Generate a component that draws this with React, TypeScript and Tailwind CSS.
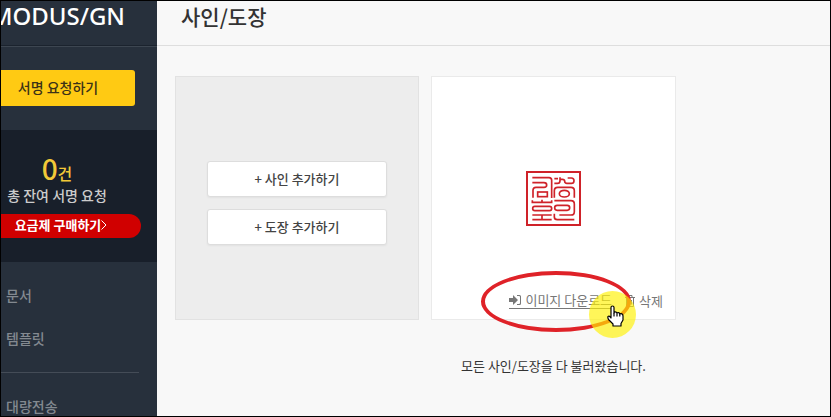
import React from 'react'

const menu = ['문서', '템플릿']

const Seal = () => (
    <svg viewBox="36 33 165 165" className="size-[55px]" fill="none" stroke="#cf2229" strokeWidth="5" role="img" aria-label="도장">
        <rect x="39" y="36" width="159" height="159" strokeWidth="6" />
        <path d="M55 53H105Q113 53 113 61V114" />
        <path d="M55 68H90Q98 68 98 75T90 82H66Q57 82 57 91V113" />
        <rect x="71" y="96" width="29" height="14" />
        <path d="M55 121V127H113V121M84 119V127" />
        <rect x="56" y="139" width="57" height="13" rx="6.5" />
        <path d="M55 165H113M84 165V178M55 179H113" />
        <path d="M121 56H132M121 70H130Q138 70 138 62V52M138 58H145Q152 58 152 64T159 70H172Q180 70 180 62T172 54H161" />
        <path d="M121 113V92Q121 82 131 82H171Q181 82 181 92V113" />
        <ellipse cx="151" cy="101" rx="15" ry="10" />
        <path d="M121 122H171Q181 122 181 132V155Q181 165 171 165H136" />
        <rect x="122" y="136" width="45" height="15" rx="7.5" />
        <path d="M121 161V171Q121 179 130 179H181" />
    </svg>
)

const Cursor = () => (
    <svg viewBox="0 0 17 22" className="absolute top-[228px] left-[175px] h-[22px] w-[17px]" fill="#fff" stroke="#000" strokeWidth="1.2" strokeLinejoin="round" aria-hidden="true">
        <path d="M4 13V2.500Q4 1 5.500 1T7 2.500V8Q7 6.800 8.300 6.800T10 8.200Q10.200 7.500 11.400 7.600T12.800 9Q13 8.500 14 8.600Q16 8.800 16 11V15L14 18.500V21H6V19L1.500 14.500Q.500 12.500 1 11.500Q2.500 10.500 4 13Z" />
        <path d="M7 8V11.500M10 8.200V11.500M12.800 9V11.500" />
    </svg>
)

const App = () => {
    return (
        <div className="flex h-screen overflow-hidden border border-black bg-[#f8f8f8] font-['Noto_Sans_CJK_KR',sans-serif] text-[#333]">
            <aside className="w-[156px] shrink-0 overflow-hidden bg-[#27303c]">
                <div className="flex h-[45px] justify-end border-b border-[#1b232e] pr-8 font-['Noto_Sans',sans-serif] text-2xl leading-[30px] font-medium text-white">
                    <span>MODUS/GN</span>
                </div>
                <div className="h-[84px] border-t border-[#3d4651] pt-[23px] pr-[22px]">
                    <button className="h-9 w-full rounded-r-[3px] bg-[#ffca13] pr-5 pb-[2px] text-sm font-medium text-[#3c3217]">서명 요청하기</button>
                </div>
                <section className="h-[132px] bg-[#181f2a] pt-[23px] pr-4 text-center">
                    <p className="pr-7 text-[28px] leading-[30px] font-medium text-[#f2c938]">
                        0<span className="text-base leading-none">건</span>
                    </p>
                    <p className="pr-7 text-sm leading-6 font-medium text-[#ccc]">총 잔여 서명 요청</p>
                    <a href="#" className="mt-[7px] flex h-6 items-center justify-center rounded-r-full bg-[#d00000] pr-5 pb-[2px] text-[13px] font-bold text-white">
                        요금제 구매하기
                        <svg viewBox="0 0 6 12" className="h-3 w-[6px]" fill="none" stroke="currentColor" aria-hidden="true">
                            <path d="M.5 1.500L5 6L.5 10.500" />
                        </svg>
                    </a>
                </section>
                <nav className="pt-3 pr-[18px] text-sm font-medium text-[#838990]">
                    {menu.map((item) => (
                        <a key={item} href="#" className="block h-[43px] pl-[5px] leading-[42px]">{item}</a>
                    ))}
                    <a href="#" className="mt-3 block border-t border-[#444c57] pt-3 pl-[5px] leading-[42px]">대량전송</a>
                </nav>
            </aside>
            <main className="min-w-0 flex-1">
                <header className="h-[45px] border-b border-[#dedede] pl-6">
                    <h1 className="text-[21px] leading-[30px] font-medium">사인/도장</h1>
                </header>
                <div className="px-[18px] pt-[30px]">
                    <div className="flex gap-3">
                        <div className="flex h-[244px] w-[244px] flex-col items-center justify-center gap-3 border border-[#e2e2e2] bg-[#ededed] pt-[10px]">
                            <button className="h-9 w-[180px] rounded-[3px] border border-[#ddd] bg-white text-[13px] font-medium text-[#444] shadow-xs">+ 사인 추가하기</button>
                            <button className="h-9 w-[180px] rounded-[3px] border border-[#ddd] bg-white text-[13px] font-medium text-[#444] shadow-xs">+ 도장 추가하기</button>
                        </div>
                        <div className="relative flex h-[244px] w-[245px] flex-col items-center justify-center border border-[#eaeaea] bg-white">
                            <Seal />
                            <div className="absolute right-3 bottom-[10px] flex items-center gap-[13px] text-[13px] text-[#777]">
                                <a href="#" className="flex items-center gap-1 border-b border-[#777] leading-4">
                                    <svg viewBox="0 0 12 12" className="size-3" fill="currentColor" aria-hidden="true">
                                        <path d="M0 4H4V1L9 6L4 11V8H0ZM8 1H10.500Q12 1 12 2.500V9.500Q12 11 10.500 11H8V10H10Q11 10 11 9V3Q11 2 10 2H8Z" />
                                    </svg>
                                    이미지 다운로드
                                </a>
                                <button className="flex items-center gap-1 leading-4">
                                    <svg viewBox="0 0 10 12" className="h-3 w-[10px]" fill="none" stroke="currentColor" aria-hidden="true">
                                        <path d="M0 2.500H10M3 2V.500H7V2M1.500 3V11.500H8.500V3M3.500 5V9.500M5 5V9.500M6.500 5V9.500" />
                                    </svg>
                                    삭제
                                </button>
                            </div>
                            <div className="pointer-events-none absolute top-[194px] left-[49px] h-[61px] w-[150px] rounded-[50%] border-4 border-[#df2228]" />
                            <div className="pointer-events-none absolute top-[214px] left-[157px] size-[47px] rounded-full bg-[#fff200]/65" />
                            <Cursor />
                        </div>
                    </div>
                    <p className="mt-[34px] ml-[256px] w-[245px] text-center text-[13px] leading-6 whitespace-nowrap">모든 사인/도장을 다 불러왔습니다.</p>
                </div>
            </main>
        </div>
    )
}

export default App
